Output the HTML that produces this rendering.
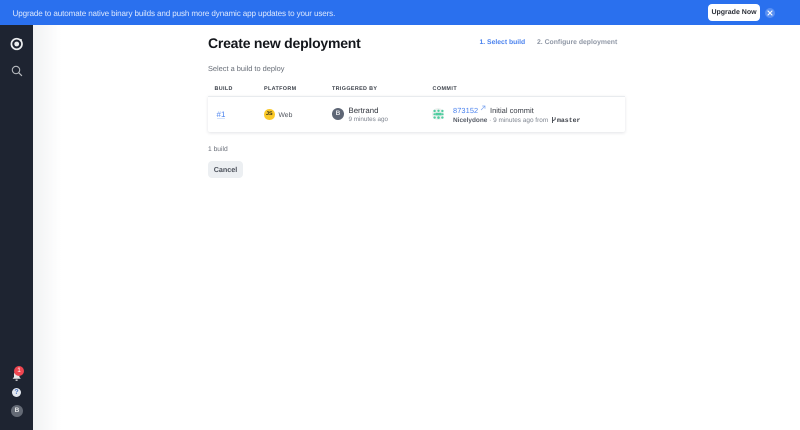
<!DOCTYPE html>
<html>
<head>
<meta charset="utf-8">
<style>
html,body{margin:0;padding:0;width:800px;height:430px;overflow:hidden;background:#fff;font-family:"Liberation Sans",sans-serif;text-rendering:geometricPrecision;}
.a{position:absolute;white-space:nowrap;line-height:1;}
#page{position:relative;width:800px;height:430px;overflow:hidden;filter:blur(0.3px);}
.h{top:85.5px;font-size:5.4px;line-height:7px;font-weight:bold;letter-spacing:.36px;color:#3a3f48;}
</style>
</head>
<body>
<div id="page">
<div class="a" style="left:0;top:0;width:800px;height:25px;background:#2a70ee;"></div>
<div class="a" style="left:12.5px;top:8px;font-size:8.1px;line-height:11px;color:#dbe7fd;letter-spacing:-.13px;">Upgrade to automate native binary builds and push more dynamic app updates to your users.</div>
<div class="a" style="left:708px;top:4px;width:52px;height:17px;background:#fff;border-radius:4px;text-align:center;font-size:7px;line-height:18px;font-weight:bold;color:#2b2f38;">Upgrade Now</div>
<div class="a" style="left:765px;top:8px;width:10px;height:10px;border-radius:50%;background:#5a90f2;"></div>
<svg class="a" style="left:765px;top:8px;" width="10" height="10" viewBox="0 0 10 10"><path d="M3 3L7 7M7 3L3 7" stroke="#fff" stroke-width="1.1" stroke-linecap="round"/></svg>

<div class="a" style="left:33px;top:25px;width:28px;height:405px;background:linear-gradient(to right,#f1f2f3,#fff);"></div>
<div class="a" style="left:0;top:25px;width:33px;height:405px;background:#1e2431;"></div>
<svg class="a" style="left:9px;top:36px;" width="16" height="16" viewBox="0 0 16 16"><circle cx="7.7" cy="8" r="5.3" fill="none" stroke="#eceef0" stroke-width="1.7"/><circle cx="7.7" cy="8" r="2.4" fill="#eceef0"/><circle cx="11.8" cy="4" r="1.1" fill="#eceef0"/></svg>
<svg class="a" style="left:10px;top:64px;" width="14" height="14" viewBox="0 0 14 14"><circle cx="6" cy="6" r="3.7" fill="none" stroke="#b5b8bd" stroke-width="1.1"/><path d="M8.8 8.8L11.6 11.6" stroke="#b5b8bd" stroke-width="1.2" stroke-linecap="round"/></svg>
<svg class="a" style="left:11px;top:369px;" width="12" height="14" viewBox="0 0 12 14"><path d="M5.5 2.5C3.8 2.5 3 3.8 3 5.5V8L1.6 9.8H9.8L8.4 8V5.5C8.4 3.8 7.2 2.5 5.5 2.5Z" fill="#e6e7e9"/><rect x="4.6" y="10.4" width="2" height="1.6" fill="#b9bbbf"/></svg>
<div class="a" style="left:14px;top:366px;width:10px;height:10px;border-radius:50%;background:#ef4650;color:#fff;font-size:6.5px;line-height:10px;text-align:center;">1</div>
<div class="a" style="left:12px;top:388px;width:9px;height:9px;border-radius:50%;background:#e4e8ef;color:#4b74bf;font-size:7px;line-height:9.5px;text-align:center;font-weight:bold;">?</div>
<div class="a" style="left:11px;top:405px;width:12px;height:12px;border-radius:50%;background:#646a75;color:#e5e6e8;font-size:6.5px;line-height:12px;text-align:center;font-weight:bold;">B</div>

<div class="a" style="left:208px;top:34.5px;font-size:14px;line-height:17px;font-weight:bold;color:#14171c;letter-spacing:-.22px;">Create new deployment</div>
<div class="a" style="left:479.5px;top:37.5px;font-size:6.8px;line-height:9px;font-weight:bold;color:#4a82ee;">1. Select build</div>
<div class="a" style="left:537px;top:37.5px;font-size:6.85px;line-height:9px;font-weight:bold;color:#8f97a5;">2. Configure deployment</div>
<div class="a" style="left:208px;top:63.5px;font-size:7.4px;line-height:10px;color:#666c76;">Select a build to deploy</div>

<div class="a h" style="left:214.5px;">BUILD</div>
<div class="a h" style="left:264px;">PLATFORM</div>
<div class="a h" style="left:332px;">TRIGGERED BY</div>
<div class="a h" style="left:432.5px;letter-spacing:.45px;">COMMIT</div>

<div class="a" style="left:208px;top:96px;width:417px;height:36px;background:#fff;border-top:1px solid #e8ebee;box-sizing:border-box;border-radius:0 0 2px 2px;box-shadow:0 1px 3px rgba(30,40,60,.13);"></div>
<div class="a" style="left:216.5px;top:109.5px;font-size:8px;line-height:10px;color:#4a82ee;">#1</div>
<div class="a" style="left:216.7px;top:118px;width:8.6px;height:1px;background:#d5e3fb;"></div>
<div class="a" style="left:264px;top:109px;width:10.5px;height:10.5px;border-radius:50%;background:#fbc928;color:#2b2a1c;font-size:5.4px;line-height:11px;text-align:center;font-weight:bold;">JS</div>
<div class="a" style="left:278.5px;top:110.5px;font-size:6.8px;line-height:9px;color:#4d525b;">Web</div>
<div class="a" style="left:332px;top:108px;width:12px;height:12px;border-radius:50%;background:#5e6675;color:#e6e7ea;font-size:6.5px;line-height:12.5px;text-align:center;font-weight:bold;">B</div>
<div class="a" style="left:348.5px;top:106px;font-size:7.8px;line-height:10px;color:#33373f;">Bertrand</div>
<div class="a" style="left:348.5px;top:114.5px;font-size:6.3px;line-height:9px;color:#7f8590;">9 minutes ago</div>

<div class="a" style="left:432px;top:108px;width:12px;height:12px;border-radius:50%;background:#eef1f0;"></div>
<svg class="a" style="left:432px;top:108px;" width="13" height="13" viewBox="0 0 13 13"><g fill="#4fcda0"><circle cx="2.6" cy="3" r="1.2"/><circle cx="6.5" cy="2.8" r="1.2"/><circle cx="10.4" cy="3" r="1.2"/><rect x="3.4" y="4.8" width="6.2" height="2.6"/><circle cx="2.4" cy="6.2" r="1"/><circle cx="10.6" cy="6.2" r="1"/><circle cx="2.6" cy="9.6" r="1.2"/><circle cx="6.5" cy="9.6" r="1.3"/><circle cx="10.4" cy="9.6" r="1.2"/></g></svg>
<div class="a" style="left:453px;top:105.5px;font-size:7.4px;line-height:10px;color:#4a82ee;letter-spacing:.1px;">873152</div>
<svg class="a" style="left:480px;top:105px;" width="6" height="6" viewBox="0 0 6 6"><path d="M1 5L5 1M2.2 1H5V3.8" fill="none" stroke="#7fa6f0" stroke-width=".7"/></svg>
<div class="a" style="left:490px;top:105.5px;font-size:7.5px;line-height:10px;color:#3a3e46;">Initial commit</div>
<div class="a" style="left:453px;top:115.5px;font-size:6.45px;line-height:9px;color:#7f8590;"><span style="font-weight:bold;color:#5a5f69;">Nicelydone</span> · 9 minutes ago from</div>
<svg class="a" style="left:551px;top:116px;" width="6" height="8" viewBox="0 0 6 8"><path d="M1.5 1V7M4.2 1.2V3.2C4.2 4.2 1.5 4.2 1.5 5.2" fill="none" stroke="#3e424a" stroke-width=".9"/></svg>
<div class="a" style="left:557px;top:115.5px;font-family:'Liberation Mono',monospace;font-size:6.5px;line-height:9px;color:#3e424a;font-weight:bold;">master</div>

<div class="a" style="left:208px;top:145px;font-size:6.7px;line-height:9px;color:#6b707a;">1 build</div>
<div class="a" style="left:208px;top:161px;width:35px;height:17px;background:#eceff2;border-radius:4px;text-align:center;font-size:7.2px;line-height:17px;font-weight:bold;color:#4b505a;">Cancel</div>
</div>
</body>
</html>
